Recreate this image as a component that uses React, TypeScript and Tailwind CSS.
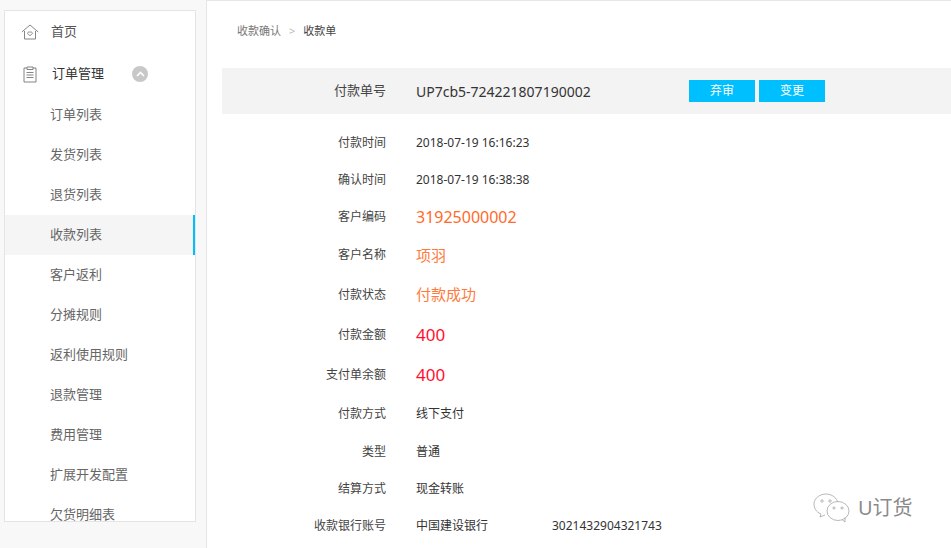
const FONT = "font-['Noto_Sans','Noto_Sans_CJK_SC',sans-serif]";

const subItems = ['订单列表', '发货列表', '退货列表', '收款列表', '客户返利', '分摊规则', '返利使用规则', '退款管理', '费用管理', '扩展开发配置', '欠货明细表'];

function HomeIcon() {
  return (
    <svg width="18" height="16" viewBox="0 0 18 16" fill="none" stroke="#777" strokeWidth="0.9">
      <path d="M0.8 8 L9 1 L17.2 8" />
      <path d="M3.5 7 V15 H14.5 V7" />
      <path d="M9 11.8 L6.6 9.4 A1.4 1.4 0 0 1 9 8.4 A1.4 1.4 0 0 1 11.4 9.4 Z" />
    </svg>
  );
}

function ClipIcon() {
  return (
    <svg width="14" height="17" viewBox="0 0 14 17" fill="none" stroke="#777" strokeWidth="0.9">
      <path d="M4 2 H1 V16 H13 V2 H10" />
      <path d="M4 3.5 V1 H10 V3.5 Z" />
      <path d="M3.5 6.5 H10.5 M3.5 9 H10.5 M3.5 11.5 H10.5" />
    </svg>
  );
}

function Row({ label, value, h, cls = 'text-[12px] text-[#333]', extra }: { label: string; value: string; h: string; cls?: string; extra?: string }) {
  return (
    <div className={`flex items-center ${h}`}>
      <div className="w-[164px] shrink-0 text-right text-[12px] text-[#444]">{label}</div>
      <div className={`ml-[30px] w-[136px] shrink-0 ${cls}`}>{value}</div>
      {extra && <div className="text-[12px] text-[#333]">{extra}</div>}
    </div>
  );
}

export default function App() {
  return (
    <div className={`flex h-[548px] w-[951px] overflow-hidden bg-white ${FONT}`}>
      <aside className="h-full w-[207px] shrink-0 border-r border-[#e6e6e6] bg-[#f8f8f8] pl-1 pt-[10px]">
        <div className="h-[512px] w-[192px] overflow-hidden border border-[#e4e4e4] bg-white">
          <div className="flex h-[42px] items-center pl-[16px] text-[13px] text-[#555]">
            <HomeIcon />
            <span className="ml-[12px]">首页</span>
          </div>
          <div className="flex h-[42px] items-center pl-[18px] text-[13px] text-[#333]">
            <ClipIcon />
            <span className="ml-[15px]">订单管理</span>
            <span className="ml-[28px] flex h-4 w-4 items-center justify-center rounded-full bg-[#c8c8c8]">
              <svg width="9" height="6" viewBox="0 0 9 6" fill="none" stroke="#fff" strokeWidth="1.6">
                <path d="M1 5 L4.5 1.5 L8 5" />
              </svg>
            </span>
          </div>
          <div className="pt-[0px]">
            {subItems.map((t) => (
              <div
                key={t}
                className={`flex h-10 items-center pl-[45px] text-[13px] text-[#666] ${t === '收款列表' ? 'border-r-2 border-[#00bfff] bg-[#f5f5f5]' : ''}`}
              >
                {t}
              </div>
            ))}
          </div>
        </div>
      </aside>
      <main className="relative flex-1 border-t border-[#e6e6e6] pl-[15px]">
        <div className="flex h-[67px] items-center pb-[6px] pl-[15px] text-[11px]">
          <span className="text-[#777]">收款确认</span>
          <span className="mx-[8px] text-[#bbb]">&gt;</span>
          <span className="text-[#444]">收款单</span>
        </div>
        <div className="flex h-[46px] items-center bg-[#f3f3f3]">
          <div className="w-[164px] shrink-0 text-right text-[13px] text-[#444]">付款单号</div>
          <div className="ml-[30px] w-[273px] shrink-0 text-[14px] text-[#333]">UP7cb5-724221807190002</div>
          <button className="flex h-[22px] w-[66px] items-center justify-center bg-[#00bfff] text-[12px] text-white">弃审</button>
          <button className="ml-1 flex h-[22px] w-[66px] items-center justify-center bg-[#00bfff] text-[12px] text-white">变更</button>
        </div>
        <div className="pt-[10px]">
          <Row label="付款时间" value="2018-07-19 16:16:23" h="h-[37px]" />
          <Row label="确认时间" value="2018-07-19 16:38:38" h="h-[37px]" />
          <Row label="客户编码" value="31925000002" h="h-[37px]" cls="text-[16px] text-[#ff6b2c]" />
          <Row label="客户名称" value="项羽" h="h-[40px]" cls="text-[15px] text-[#ff7a3c]" />
          <Row label="付款状态" value="付款成功" h="h-[39px]" cls="text-[15px] text-[#ff7a3c]" />
          <Row label="付款金额" value="400" h="h-[41px]" cls="text-[17px] text-[#ff0f2f]" />
          <Row label="支付单余额" value="400" h="h-[39px]" cls="text-[17px] text-[#ff0f2f]" />
          <Row label="付款方式" value="线下支付" h="h-[39px]" />
          <Row label="类型" value="普通" h="h-[37px]" />
          <Row label="结算方式" value="现金转账" h="h-[37px]" />
          <Row label="收款银行账号" value="中国建设银行" h="h-[37px]" extra="3021432904321743" />
        </div>
        <div className="absolute left-[606px] top-[492px] flex items-center gap-[7px]">
          <svg width="38" height="30" viewBox="0 0 38 30" fill="none" stroke="#999" strokeWidth="0.7">
            <path d="M8 21 C3 19 1 15 1 11 C1 5 7 1 13 1 C19 1 24 5 25 10" />
            <path d="M8 21 L7 24 L12 22" />
            <ellipse cx="25" cy="18" rx="11" ry="9.5" fill="#fff" />
            <path d="M29 26.5 L32 29 L32 24.5" />
            <circle cx="9" cy="8" r="1.2" />
            <circle cx="17" cy="8" r="1.2" />
            <circle cx="21" cy="15" r="1.1" />
            <circle cx="29" cy="15" r="1.1" />
          </svg>
          <span className="text-[20px] leading-none text-[#8a8a8a]">U订货</span>
        </div>
      </main>
    </div>
  );
}
